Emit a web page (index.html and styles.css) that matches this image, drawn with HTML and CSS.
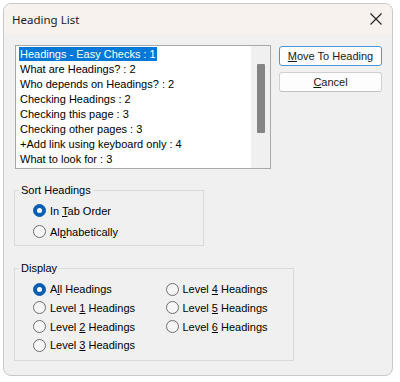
FILE: index.html
```html
<!DOCTYPE html>
<html lang="en">
<head>
    <meta charset="UTF-8">
    <meta name="viewport" content="width=device-width, initial-scale=1.0">
    <title>Heading List</title>
    <link rel="stylesheet" href="styles.css">
</head>
<body>
    <div class="window">
        <div class="titlebar">
            <span class="title">Heading List</span>
            <svg class="close" width="12" height="12" viewBox="0 0 12 12">
                <path d="M0.5 0.5 L11.5 11.5 M11.5 0.5 L0.5 11.5" stroke="#1f1f1f" stroke-width="1.1" fill="none"/>
            </svg>
        </div>

        <div class="content">
            <div class="top-row">
                <div class="listbox">
                    <ul class="items">
                        <li><span class="selected">Headings - Easy Checks : 1</span></li>
                        <li><span>What are Headings? : 2</span></li>
                        <li><span>Who depends on Headings? : 2</span></li>
                        <li><span>Checking Headings : 2</span></li>
                        <li><span>Checking this page : 3</span></li>
                        <li><span>Checking other pages : 3</span></li>
                        <li><span>+Add link using keyboard only : 4</span></li>
                        <li><span>What to look for : 3</span></li>
                    </ul>
                    <div class="scrollbar">
                        <div class="thumb"></div>
                    </div>
                </div>
                <div class="buttons">
                    <button class="btn default"><u>M</u>ove To Heading</button>
                    <button class="btn"><u>C</u>ancel</button>
                </div>
            </div>

            <fieldset class="group sort">
                <legend>Sort Headings</legend>
                <div class="radio-list">
                    <label class="option"><span class="radio checked"></span><span>In <u>T</u>ab Order</span></label>
                    <label class="option"><span class="radio"></span><span>Al<u>p</u>habetically</span></label>
                </div>
            </fieldset>

            <fieldset class="group display">
                <legend>Display</legend>
                <div class="radio-grid">
                    <label class="option"><span class="radio checked"></span><span>A<u>l</u>l Headings</span></label>
                    <label class="option"><span class="radio"></span><span>Level <u>1</u> Headings</span></label>
                    <label class="option"><span class="radio"></span><span>Level <u>2</u> Headings</span></label>
                    <label class="option"><span class="radio"></span><span>Level <u>3</u> Headings</span></label>
                    <label class="option"><span class="radio"></span><span>Level <u>4</u> Headings</span></label>
                    <label class="option"><span class="radio"></span><span>Level <u>5</u> Headings</span></label>
                    <label class="option"><span class="radio"></span><span>Level <u>6</u> Headings</span></label>
                </div>
            </fieldset>
        </div>
    </div>
</body>
</html>
```

FILE: styles.css
```css
body {
    margin: 0;
    padding: 3px;
    background: #ffffff;
    font-family: "Liberation Sans", Arial, sans-serif;
    font-size: 11px;
    color: #000;
}
.window {
    box-sizing: border-box;
    width: 390px;
    height: 373px;
    border: 1px solid #c8c8c8;
    border-radius: 8px;
    overflow: hidden;
    background: #f0f0f0;
}
.titlebar {
    height: 30px;
    display: flex;
    align-items: center;
    justify-content: space-between;
    padding: 0 10px 0 8px;
    background: #f7f2ee;
}
.title {
    font-family: "Noto Sans", sans-serif;
    font-size: 11.5px;
    color: #1a1a1a;
}
.close {
    display: block;
}
.content {
    padding: 11px 0 0 10px;
}
.top-row {
    display: flex;
    gap: 8px;
    margin-left: 1px;
}
.listbox {
    box-sizing: border-box;
    width: 256px;
    height: 124px;
    border: 1px solid #a8a8a8;
    background: #fff;
    display: flex;
}
.items {
    flex: 1;
    list-style: none;
    margin: 0;
    padding: 1px 0 0 3px;
}
.items li {
    height: 15px;
    line-height: 15px;
}
.items span {
    display: inline-block;
    padding: 0 1px;
    line-height: 14px;
}
.items .selected {
    background: #0078d7;
    color: #fff;
}
.scrollbar {
    width: 19px;
    background: #f0f0f0;
    display: flex;
    justify-content: center;
    padding-top: 18px;
}
.thumb {
    width: 8px;
    height: 69px;
    border-radius: 1px;
    background: #858585;
}
.buttons {
    display: flex;
    flex-direction: column;
    gap: 6px;
    margin-top: 1px;
}
.btn {
    width: 103px;
    height: 20px;
    padding: 0;
    border: 1px solid #d0d0d0;
    border-bottom-color: #c2c2c2;
    border-radius: 3px;
    background: #fdfdfd;
    font-family: "Liberation Sans", Arial, sans-serif;
    font-size: 11px;
    color: #1a1a1a;
}
.btn.default {
    border-color: #4a96d8;
}
.group {
    box-sizing: border-box;
    margin: 0;
    padding: 3px 4px 3px 4px;
    border: 1px solid #dadada;
    min-inline-size: 0;
}
.group legend {
    padding: 0 2px;
    line-height: 14px;
}
.sort {
    width: 190px;
    margin-top: 14px;
}
.display {
    width: 280px;
    margin-top: 15px;
    padding-top: 5px;
    padding-bottom: 5px;
}
.radio-list {
    margin-left: 14px;
}
.radio-list .option {
    height: 21px;
}
.radio-grid {
    margin-left: 14px;
    display: grid;
    grid-auto-flow: column;
    grid-template-columns: 132.5px auto;
    grid-template-rows: repeat(4, 18.67px);
}
.option {
    display: flex;
    align-items: center;
    gap: 4px;
}
.radio {
    box-sizing: border-box;
    width: 13px;
    height: 13px;
    border: 1px solid #6e6e6e;
    border-radius: 50%;
    background: #f6f6f6;
    display: flex;
    align-items: center;
    justify-content: center;
}
.radio.checked {
    border-color: #0a5fb4;
    background: #0a5fb4;
}
.radio.checked::after {
    content: "";
    width: 5px;
    height: 5px;
    border-radius: 50%;
    background: #fff;
}
```
